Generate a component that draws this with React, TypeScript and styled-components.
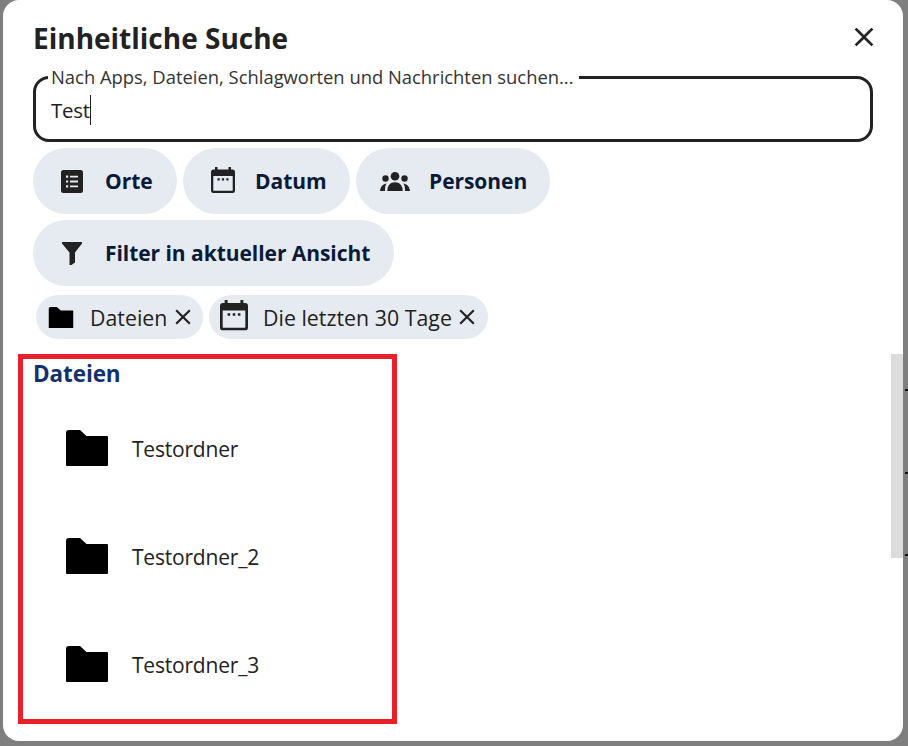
import React from "react"
import styled, { createGlobalStyle } from "styled-components"
import { MdClose } from "react-icons/md"

const GlobalStyle = createGlobalStyle`
  html, body {
    margin: 0;
    padding: 0;
    width: 908px;
    height: 746px;
    overflow: hidden;
    background: #7f7f7f;
    font-family: "Open Sans", "Noto Sans", sans-serif;
  }
`

const Backdrop = styled.div`
  position: relative;
  width: 908px;
  height: 746px;
  padding: 0 5px 5px 3px;
  box-sizing: border-box;
`

const Dialog = styled.div`
  position: relative;
  height: 741px;
  background: #fff;
  border-radius: 16px;
  padding: 12px 30px 0;
  box-sizing: border-box;
  overflow: hidden;
`

const Header = styled.div`
  display: flex;
  align-items: center;
  justify-content: space-between;
  height: 48px;
  margin-bottom: 16px;
`

const Title = styled.h1`
  margin: 4px 0 0;
  font-size: 28px;
  font-weight: 700;
  color: #222;
`

const CloseButton = styled.button`
  display: flex;
  padding: 0;
  margin: 2px -7px 0 0;
  border: 0;
  background: none;
  color: #222;
`

const SearchBox = styled.div`
  position: relative;
  height: 66px;
  border: 3px solid #222;
  border-radius: 16px;
  box-sizing: border-box;
  padding: 16px 15px 0;
  margin-bottom: 6px;
`

const SearchLabel = styled.label`
  position: absolute;
  top: -12px;
  left: 12px;
  padding: 0 5px 0 3px;
  background: #fff;
  font-size: 18.4px;
  line-height: 20px;
  color: #333;
`

const SearchValue = styled.div`
  display: inline-block;
  font-size: 20.5px;
  line-height: 30px;
  letter-spacing: -0.3px;
  color: #222;
  border-right: 1px solid #222;
`

const FilterRow = styled.div`
  display: flex;
  gap: 6px;
  margin-bottom: 6px;
`

const FilterButton = styled.button<{ $width: number; $gap: number; $pad: number }>`
  display: flex;
  align-items: center;
  gap: ${({ $gap }) => $gap}px;
  width: ${({ $width }) => $width}px;
  height: 66px;
  padding: 0 0 0 ${({ $pad }) => $pad}px;
  border: 0;
  border-radius: 33px;
  box-sizing: border-box;
  background: #e6eaf1;
  font-family: inherit;
  font-size: 21px;
  font-weight: 700;
  letter-spacing: -0.05px;
  color: #0b1a38;

  svg {
    flex: none;
  }
`

const ChipRow = styled.div`
  display: flex;
  gap: 6px;
  margin: 9px 0 15px 3px;
`

const Chip = styled.div<{ $width: number; $gap: number; $pad: number }>`
  display: flex;
  align-items: center;
  gap: ${({ $gap }) => $gap}px;
  width: ${({ $width }) => $width}px;
  height: 44px;
  padding-left: ${({ $pad }) => $pad}px;
  border-radius: 22px;
  box-sizing: border-box;
  background: #e6eaf1;
  font-size: 21.3px;
  letter-spacing: 0.03px;
  color: #222;

  svg {
    flex: none;
  }
`

const ChipClose = styled(MdClose)`
  margin-left: -13px;
`

const SectionTitle = styled.h2`
  margin: 0;
  height: 40px;
  font-size: 22.5px;
  line-height: 40px;
  font-weight: 700;
  letter-spacing: -0.1px;
  color: #13306f;
`

const ResultRow = styled.div`
  display: flex;
  align-items: center;
  gap: 24px;
  height: 108px;
  padding-left: 33px;
  font-size: 21px;
  letter-spacing: -0.2px;
  color: #222;
`

const ResultName = styled.span`
  margin-top: 2px;
`

const ScrollThumb = styled.div`
  position: absolute;
  top: 354px;
  right: 0;
  width: 12px;
  height: 204px;
  background: #dcdcdc;
`

const Highlight = styled.div`
  position: absolute;
  top: 354px;
  left: 18px;
  width: 379px;
  height: 370px;
  border: 5px solid #e82029;
  box-sizing: border-box;
  pointer-events: none;
`

const Tick = styled.span<{ $top: number }>`
  position: absolute;
  top: ${({ $top }) => $top}px;
  right: 0;
  width: 3px;
  height: 2px;
  background: #111;
`

const CalendarSvg = styled.svg`
  margin-top: -3px;
`

const FolderIcon = ({ width, height }: { width: number; height: number }) => (
  <svg width={width} height={height} viewBox="0 0 42 36">
    <path
      fill="#000"
      d="M3 0H14L20.5 6H41A1 1 0 0 1 42 7V35A1 1 0 0 1 41 36H1A1 1 0 0 1 0 35V3A3 3 0 0 1 3 0Z"
    />
  </svg>
)

const CalendarIcon = ({ width }: { width: number }) => (
  <CalendarSvg width={width} height={(width * 26) / 24} viewBox="0 0 24 26" fill="#222">
    <path
      fillRule="evenodd"
      d="M4 0H6.5V2.5H17.5V0H20V2.5H21.5A2.5 2.5 0 0 1 24 5V23.5A2.5 2.5 0 0 1 21.5 26H2.5A2.5 2.5 0 0 1 0 23.5V5A2.5 2.5 0 0 1 2.5 2.5H4ZM2.3 9V23.2A.5.5 0 0 0 2.8 23.7H21.2A.5.5 0 0 0 21.7 23.2V9Z"
    />
    <path d="M6.5 11.3H8.7V13.5H6.5ZM10.9 11.3H13.1V13.5H10.9ZM15.3 11.3H17.5V13.5H15.3Z" />
  </CalendarSvg>
)

const ListBoxIcon = () => (
  <svg width={22} height={23} viewBox="0 0 22 23">
    <path
      fill="#222"
      fillRule="evenodd"
      d="M2.5 0H19.5A2.5 2.5 0 0 1 22 2.5V20.5A2.5 2.5 0 0 1 19.5 23H2.5A2.5 2.5 0 0 1 0 20.5V2.5A2.5 2.5 0 0 1 2.5 0ZM5 5.5V7.7H7.2V5.5ZM9 5.7V7.5H17V5.7ZM5 10.4V12.6H7.2V10.4ZM9 10.6V12.4H17V10.6ZM5 15.3V17.5H7.2V15.3ZM9 15.5V17.3H17V15.5Z"
    />
  </svg>
)

const PeopleIcon = () => (
  <svg width={30} height={19} viewBox="0 0 30 19" fill="#222">
    <circle cx="15" cy="4.3" r="4.3" />
    <circle cx="5.5" cy="6.5" r="3.2" />
    <circle cx="24.5" cy="6.5" r="3.2" />
    <path d="M7.3 19C7.3 13 10.5 10.2 15 10.2S22.7 13 22.7 19Z" />
    <path d="M0 19C.5 14.5 3 12 6.5 11.5 5.2 13.5 5 16 5 19Z" />
    <path d="M30 19C29.5 14.5 27 12 23.5 11.5 24.8 13.5 25 16 25 19Z" />
  </svg>
)

const FunnelIcon = () => (
  <svg width={20} height={23} viewBox="0 0 20 23" fill="#222">
    <path d="M0 0H20V1.5L13 10.5V20.5L9.5 23H7.5V10.5L0 1.5Z" />
  </svg>
)

const results = ["Testordner", "Testordner_2", "Testordner_3"]

const App = () => (
  <Backdrop>
    <GlobalStyle />
    <Dialog>
      <Header>
        <Title>Einheitliche Suche</Title>
        <CloseButton aria-label="Schließen">
          <MdClose size={32} />
        </CloseButton>
      </Header>

      <SearchBox>
        <SearchLabel>Nach Apps, Dateien, Schlagworten und Nachrichten suchen...</SearchLabel>
        <SearchValue>Test</SearchValue>
      </SearchBox>

      <FilterRow>
        <FilterButton $width={144} $gap={22} $pad={28}>
          <ListBoxIcon />
          Orte
        </FilterButton>
        <FilterButton $width={167} $gap={20} $pad={28}>
          <CalendarIcon width={24} />
          Datum
        </FilterButton>
        <FilterButton $width={194} $gap={19} $pad={24}>
          <PeopleIcon />
          Personen
        </FilterButton>
      </FilterRow>

      <FilterRow>
        <FilterButton $width={361} $gap={23} $pad={29}>
          <FunnelIcon />
          Filter in aktueller Ansicht
        </FilterButton>
      </FilterRow>

      <ChipRow>
        <Chip $width={167} $gap={16} $pad={12}>
          <FolderIcon width={26} height={21} />
          Dateien
          <ChipClose size={26} />
        </Chip>
        <Chip $width={279} $gap={15} $pad={11}>
          <CalendarIcon width={28} />
          Die letzten 30 Tage
          <ChipClose size={26} />
        </Chip>
      </ChipRow>

      <SectionTitle>Dateien</SectionTitle>
      {results.map((name) => (
        <ResultRow key={name}>
          <FolderIcon width={42} height={36} />
          <ResultName>{name}</ResultName>
        </ResultRow>
      ))}

      <ScrollThumb />
    </Dialog>

    <Highlight />
    <Tick $top={389} />
    <Tick $top={472} />
    <Tick $top={554} />
  </Backdrop>
)

export default App
